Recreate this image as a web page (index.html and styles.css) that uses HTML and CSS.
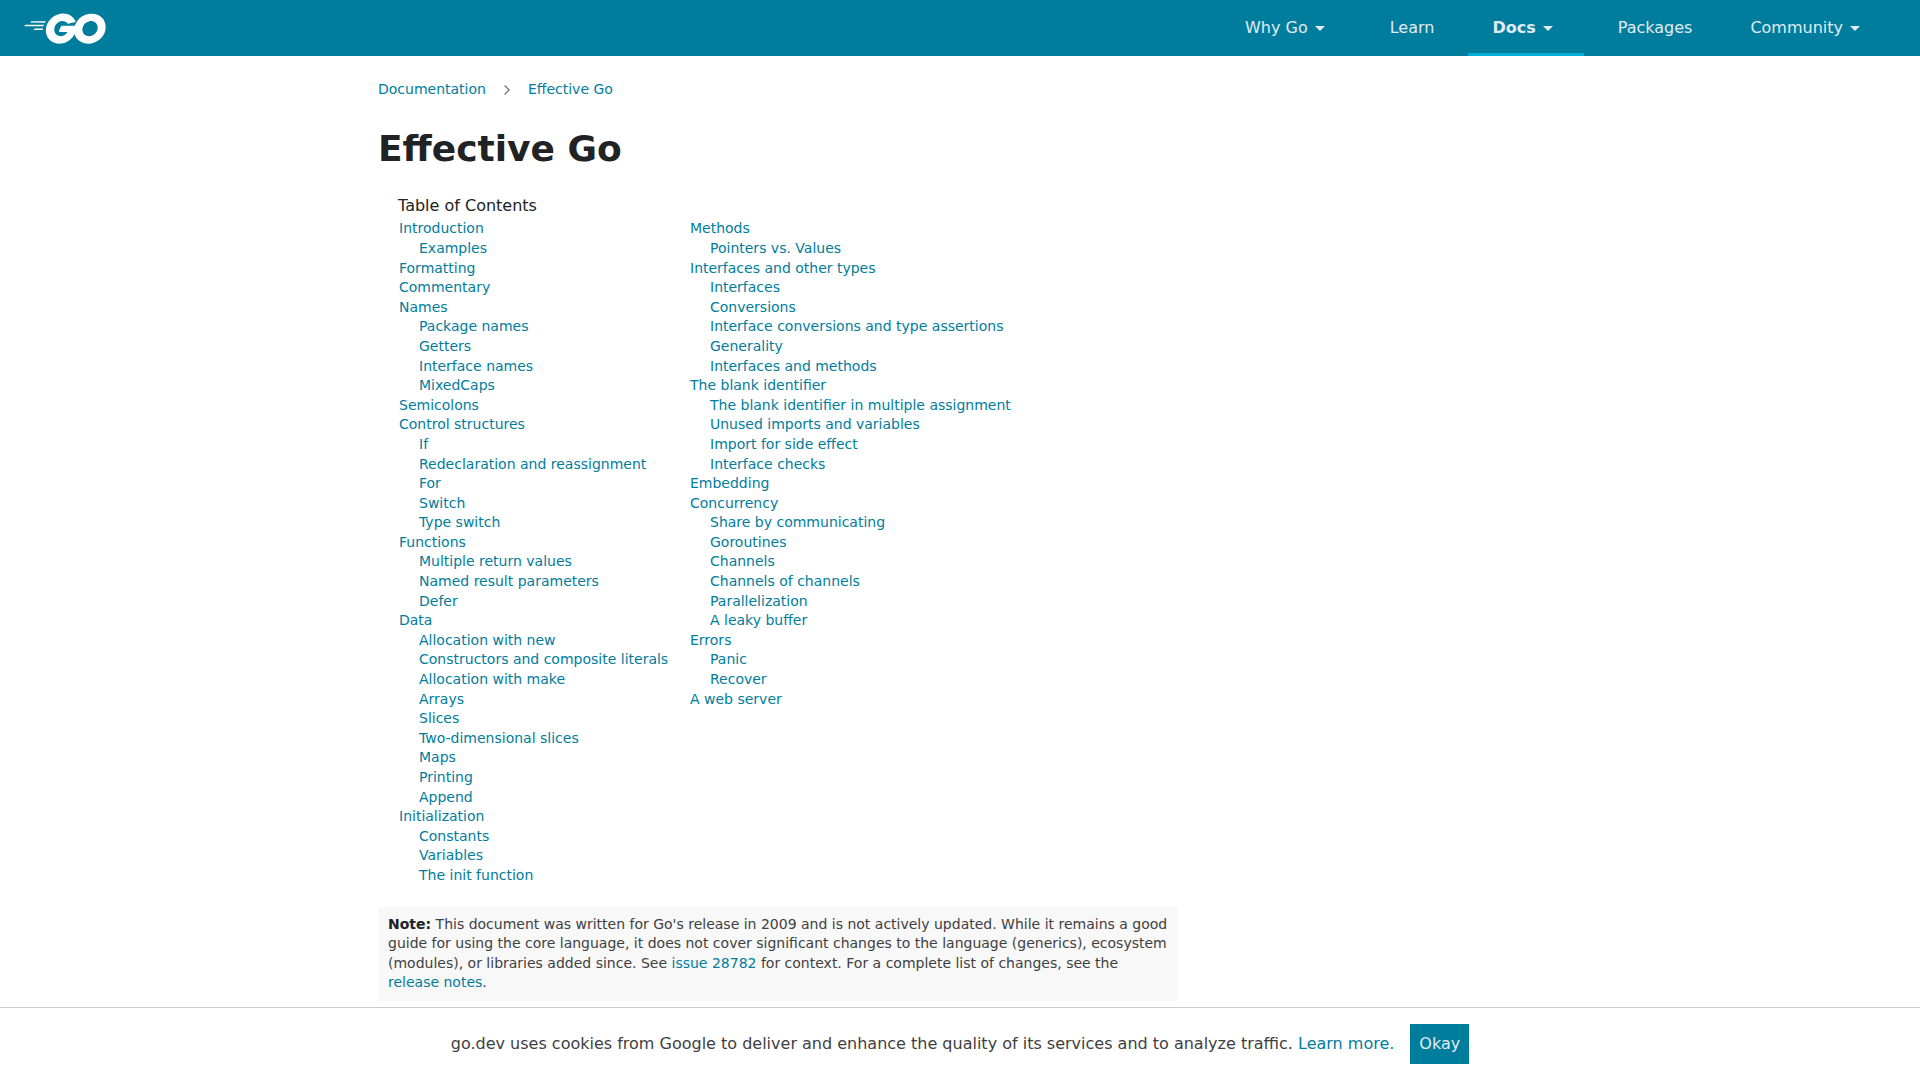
FILE: index.html
```html
<!DOCTYPE html>
<html lang="en">
<head>
<meta charset="utf-8">
<title>Effective Go - The Go Programming Language</title>
<link rel="stylesheet" href="styles.css">
</head>
<body>
<header class="header">
  <a class="logo" href="#" aria-label="Go">
    <svg class="logo-svg" viewBox="0 0 207 78" fill="#fff" aria-hidden="true">
      <path d="m16.2 24.1c-.4 0-.5-.2-.3-.5l2.1-2.7c.2-.3.7-.5 1.1-.5h35.7c.4 0 .5.3.3.6l-1.7 2.6c-.2.3-.7.6-1 .6z"/>
      <path d="m1.1 33.3c-.4 0-.5-.2-.3-.5l2.1-2.7c.2-.3.7-.5 1.1-.5h45.6c.4 0 .6.3.5.6l-.8 2.4c-.1.4-.5.6-.9.6z"/>
      <path d="m25.3 42.5c-.4 0-.5-.3-.3-.6l1.4-2.5c.2-.3.6-.6 1-.6h20c.4 0 .6.3.6.7l-.2 2.4c0 .4-.4.7-.7.7z"/>
      <path d="m129.1 22.3c-6.3 1.6-10.6 2.8-16.8 4.4-1.5.4-1.6.5-2.9-1-1.5-1.7-2.6-2.8-4.7-3.8-6.3-3.1-12.4-2.2-18.1 1.5-6.8 4.4-10.3 10.9-10.2 19 .1 8 5.6 14.6 13.5 15.7 6.8.9 12.5-1.5 17-6.6.9-1.1 1.7-2.3 2.7-3.7h-19.3c-2.1 0-2.6-1.3-1.9-3 1.3-3.1 3.7-8.3 5.1-10.9.3-.6 1-1.6 2.5-1.6h36.4c-.2 2.7-.2 5.4-.6 8.1-1.1 7.2-3.8 13.8-8.2 19.6-7.2 9.5-16.6 15.4-28.5 17-9.8 1.3-18.9-.6-26.9-6.6-7.4-5.6-11.6-13-12.7-22.2-1.3-10.9 1.9-20.7 8.5-29.3 7.1-9.3 16.5-15.2 28-17.3 9.4-1.7 18.4-.6 26.5 4.9 5.3 3.5 9.1 8.3 11.6 14.1.6.9.2 1.4-1 1.7z"/>
      <path d="m162.2 77.6c-9.1-.2-17.4-2.8-24.4-8.8-5.9-5.1-9.6-11.6-10.8-19.3-1.8-11.3 1.3-21.3 8.1-30.2 7.3-9.6 16.1-14.6 28-16.7 10.2-1.8 19.8-.8 28.5 5.1 7.9 5.4 12.8 12.7 14.1 22.3 1.7 13.5-2.2 24.5-11.5 33.9-6.6 6.7-14.7 10.9-24 12.8-2.7.5-5.4.6-8 .9zm23.8-40.4c-.1-1.3-.1-2.3-.3-3.3-1.8-9.9-10.9-15.5-20.4-13.3-9.3 2.1-15.3 8-17.5 17.4-1.8 7.8 2 15.7 9.2 18.9 5.5 2.4 11 2.1 16.3-.6 7.9-4.1 12.2-10.5 12.7-19.1z"/>
    </svg>
  </a>
  <nav class="nav">
    <a class="nav-item" href="#">Why Go<svg class="caret" viewBox="0 0 24 24" aria-hidden="true"><path d="M7 10l5 5 5-5z"/></svg></a>
    <a class="nav-item" href="#">Learn</a>
    <a class="nav-item nav-item--active" href="#">Docs<svg class="caret" viewBox="0 0 24 24" aria-hidden="true"><path d="M7 10l5 5 5-5z"/></svg></a>
    <a class="nav-item" href="#">Packages</a>
    <a class="nav-item" href="#">Community<svg class="caret" viewBox="0 0 24 24" aria-hidden="true"><path d="M7 10l5 5 5-5z"/></svg></a>
  </nav>
</header>

<main class="article">
  <ol class="breadcrumb">
    <li><a href="#">Documentation</a></li>
    <li class="breadcrumb-sep" aria-hidden="true"><svg class="chevron" viewBox="0 0 6 10"><path d="M.6.5 5.2 5 .6 9.5"/></svg></li>
    <li><a href="#">Effective Go</a></li>
  </ol>
  <h1 class="title">Effective Go</h1>

  <section class="toc">
    <h2 class="toc-heading">Table of Contents</h2>
    <div class="toc-columns">
      <ul class="toc-list">
        <li><a href="#">Introduction</a></li>
        <li class="sub"><a href="#">Examples</a></li>
        <li><a href="#">Formatting</a></li>
        <li><a href="#">Commentary</a></li>
        <li><a href="#">Names</a></li>
        <li class="sub"><a href="#">Package names</a></li>
        <li class="sub"><a href="#">Getters</a></li>
        <li class="sub"><a href="#">Interface names</a></li>
        <li class="sub"><a href="#">MixedCaps</a></li>
        <li><a href="#">Semicolons</a></li>
        <li><a href="#">Control structures</a></li>
        <li class="sub"><a href="#">If</a></li>
        <li class="sub"><a href="#">Redeclaration and reassignment</a></li>
        <li class="sub"><a href="#">For</a></li>
        <li class="sub"><a href="#">Switch</a></li>
        <li class="sub"><a href="#">Type switch</a></li>
        <li><a href="#">Functions</a></li>
        <li class="sub"><a href="#">Multiple return values</a></li>
        <li class="sub"><a href="#">Named result parameters</a></li>
        <li class="sub"><a href="#">Defer</a></li>
        <li><a href="#">Data</a></li>
        <li class="sub"><a href="#">Allocation with new</a></li>
        <li class="sub"><a href="#">Constructors and composite literals</a></li>
        <li class="sub"><a href="#">Allocation with make</a></li>
        <li class="sub"><a href="#">Arrays</a></li>
        <li class="sub"><a href="#">Slices</a></li>
        <li class="sub"><a href="#">Two-dimensional slices</a></li>
        <li class="sub"><a href="#">Maps</a></li>
        <li class="sub"><a href="#">Printing</a></li>
        <li class="sub"><a href="#">Append</a></li>
        <li><a href="#">Initialization</a></li>
        <li class="sub"><a href="#">Constants</a></li>
        <li class="sub"><a href="#">Variables</a></li>
        <li class="sub"><a href="#">The init function</a></li>
      </ul>
      <ul class="toc-list">
        <li><a href="#">Methods</a></li>
        <li class="sub"><a href="#">Pointers vs. Values</a></li>
        <li><a href="#">Interfaces and other types</a></li>
        <li class="sub"><a href="#">Interfaces</a></li>
        <li class="sub"><a href="#">Conversions</a></li>
        <li class="sub"><a href="#">Interface conversions and type assertions</a></li>
        <li class="sub"><a href="#">Generality</a></li>
        <li class="sub"><a href="#">Interfaces and methods</a></li>
        <li><a href="#">The blank identifier</a></li>
        <li class="sub"><a href="#">The blank identifier in multiple assignment</a></li>
        <li class="sub"><a href="#">Unused imports and variables</a></li>
        <li class="sub"><a href="#">Import for side effect</a></li>
        <li class="sub"><a href="#">Interface checks</a></li>
        <li><a href="#">Embedding</a></li>
        <li><a href="#">Concurrency</a></li>
        <li class="sub"><a href="#">Share by communicating</a></li>
        <li class="sub"><a href="#">Goroutines</a></li>
        <li class="sub"><a href="#">Channels</a></li>
        <li class="sub"><a href="#">Channels of channels</a></li>
        <li class="sub"><a href="#">Parallelization</a></li>
        <li class="sub"><a href="#">A leaky buffer</a></li>
        <li><a href="#">Errors</a></li>
        <li class="sub"><a href="#">Panic</a></li>
        <li class="sub"><a href="#">Recover</a></li>
        <li><a href="#">A web server</a></li>
      </ul>
    </div>
  </section>

  <p class="note"><strong class="note-label">Note:</strong> This document was written for Go's release in 2009 and is not actively updated. While it remains a good guide for using the core language, it does not cover significant changes to the language (generics), ecosystem (modules), or libraries added since. See <a href="#">issue 28782</a> for context. For a complete list of changes, see the <a href="#">release notes</a>.</p>
</main>

<aside class="cookie">
  <p class="cookie-text">go.dev uses cookies from Google to deliver and enhance the quality of its services and to analyze traffic. <a href="#">Learn more.</a></p>
  <button class="cookie-button" type="button">Okay</button>
</aside>
</body>
</html>
```

FILE: styles.css
```css
* {
  box-sizing: border-box;
}

html,
body {
  height: 100%;
  overflow: hidden;
}

body {
  margin: 0;
  font-family: "DejaVu Sans", sans-serif;
  font-size: 14px;
  line-height: 19.6px;
  color: #3e4042;
  background: #fff;
}

a {
  color: #007d9c;
  text-decoration: none;
}

.header {
  display: flex;
  justify-content: space-between;
  align-items: stretch;
  height: 56px;
  padding: 0 29px 0 24px;
  background: #007d9c;
}

.logo {
  display: flex;
  align-items: center;
}

.logo-svg {
  display: block;
  width: 82px;
  height: 31px;
}

.nav {
  display: flex;
  align-items: stretch;
  gap: 10px;
}

.nav-item {
  display: flex;
  align-items: center;
  padding: 0 24px;
  font-size: 16px;
  color: #e0ebf5;
  border-top: 3px solid transparent;
  border-bottom: 3px solid transparent;
}

.nav-item--active {
  font-weight: 700;
  border-bottom-color: #00add8;
}

.caret {
  width: 24px;
  height: 24px;
  fill: #e0ebf5;
}

.article {
  width: 800px;
  margin-left: 378px;
}

.breadcrumb {
  display: flex;
  align-items: center;
  gap: 18px;
  margin: 0;
  padding: 24px 0 0;
  list-style: none;
}

.chevron {
  display: block;
  width: 6px;
  height: 10px;
  fill: none;
  stroke: #6e7072;
  stroke-width: 1.2;
}

.title {
  margin: 24px 0 0;
  font-size: 36px;
  line-height: 50px;
  font-weight: 700;
  color: #202224;
}

.toc {
  margin-top: 21px;
  padding-left: 20px;
}

.toc-heading {
  margin: 0 0 2.8px;
  font-size: 16px;
  line-height: 22px;
  font-weight: 400;
  color: #202224;
}

.toc-columns {
  display: grid;
  grid-template-columns: 291px 1fr;
}

.toc-list {
  margin: 0;
  padding: 0 0 0 1px;
  list-style: none;
}

.sub {
  padding-left: 20px;
}

.note {
  margin: 21px 0 0;
  padding: 8px 10px;
  background: #f8f8f8;
  border-radius: 4px;
}

.note-label {
  color: #202224;
}

.cookie {
  position: fixed;
  left: 0;
  right: 0;
  bottom: 0;
  display: flex;
  justify-content: center;
  align-items: center;
  gap: 16px;
  height: 73px;
  background: #fff;
  border-top: 1px solid #ccc;
}

.cookie-text {
  margin: 0;
  font-size: 16px;
  line-height: 22px;
}

.cookie-button {
  height: 40px;
  padding: 0 9px;
  border: 0;
  background: #007d9c;
  color: #e0ebf5;
  font: inherit;
  font-size: 16px;
}
```
